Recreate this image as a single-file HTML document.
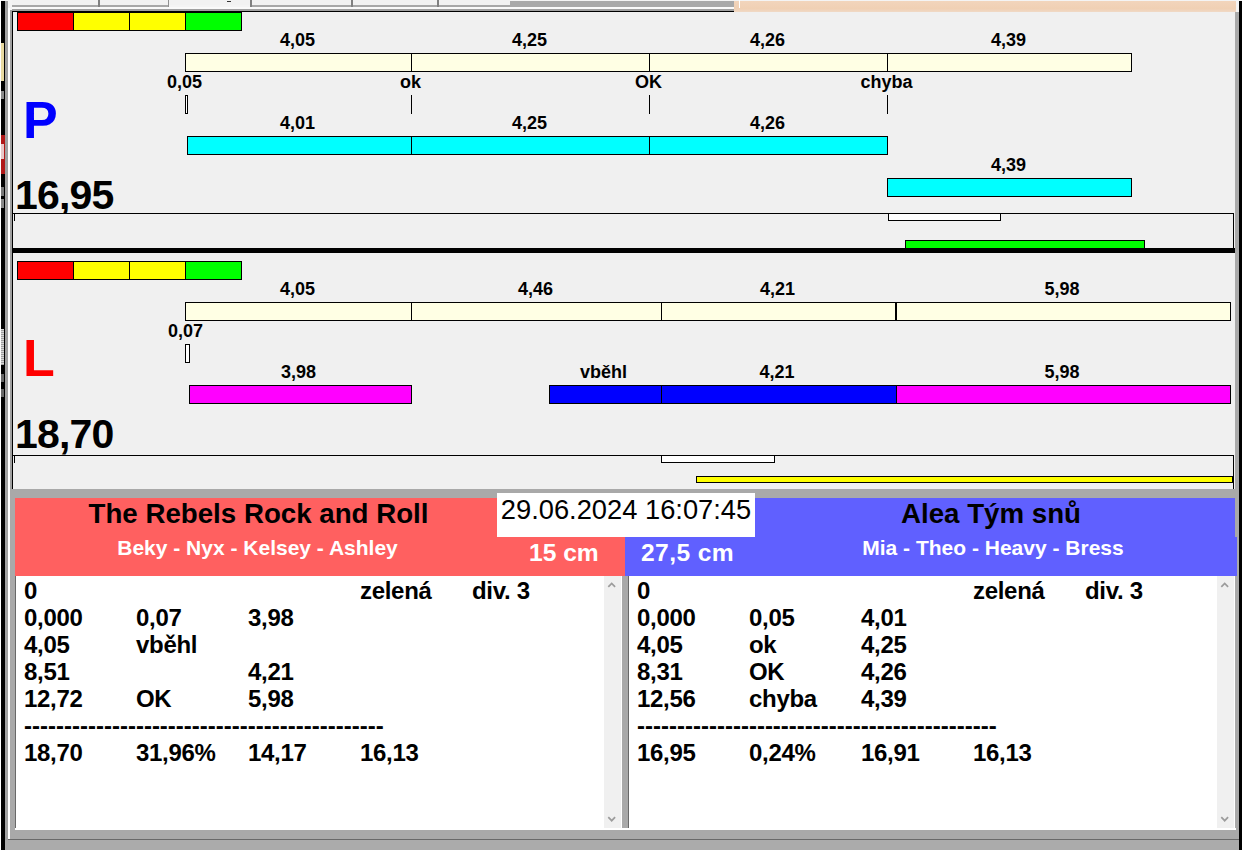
<!DOCTYPE html>
<html lang="cs">
<head>
<meta charset="utf-8">
<title>Flyball</title>
<style>
html,body{margin:0;padding:0;}
body{width:1242px;height:850px;overflow:hidden;background:#f0f0f0;position:relative;font-family:"Liberation Sans",Arial,sans-serif;font-weight:bold;color:#000;}
#root{position:absolute;left:0;top:0;width:1242px;height:850px;overflow:hidden;}
#root div{position:absolute;box-sizing:border-box;}
.bar{border:1px solid #000;}
.t{font-size:18px;line-height:20px;height:20px;text-align:center;white-space:nowrap;}
.big{font-size:52px;line-height:58px;white-space:nowrap;}
.num{font-size:41px;line-height:46px;white-space:nowrap;letter-spacing:-0.8px;}
.li{font-size:24px;line-height:27px;height:27px;white-space:nowrap;letter-spacing:-0.3px;}
.li.d{letter-spacing:0;}
.hd1{font-size:27.7px;line-height:30px;text-align:center;white-space:nowrap;}
.hd2{font-size:21px;line-height:24px;text-align:center;white-space:nowrap;color:#fff;}
.cm{font-size:24.6px;line-height:26px;white-space:nowrap;color:#fff;}
</style>
</head>
<body>
<div id="root">
<!-- top strip -->
<div style="left:0;top:0;width:1242px;height:12px;background:#f4f4f4;"></div>
<div style="left:12px;top:0;width:498px;height:5px;background:#f2f2f2;"></div>
<div style="left:12px;top:5px;width:157px;height:2px;background:#a8a8a8;"></div>
<div style="left:251px;top:5px;width:259px;height:2px;background:#a8a8a8;"></div>
<div style="left:98px;top:0;width:2px;height:7px;background:#808080;"></div>
<div style="left:168px;top:0;width:1px;height:7px;background:#909090;"></div>
<div style="left:250px;top:0;width:2px;height:7px;background:#808080;"></div>
<div style="left:351px;top:0;width:2px;height:7px;background:#808080;"></div>
<div style="left:437px;top:0;width:2px;height:7px;background:#808080;"></div>
<div style="left:510px;top:1px;width:224px;height:6px;background:#a9a9a9;"></div>
<div style="left:12px;top:7px;width:722px;height:2px;background:#fafafa;"></div>
<div style="left:12px;top:9px;width:722px;height:2px;background:#a0a0a0;"></div>
<div style="left:12px;top:11px;width:722px;height:1px;background:#000;"></div>
<div style="left:734px;top:1px;width:502px;height:11px;background:linear-gradient(#f2d5bc,#f0d0b4 70%,#f0d9c6);"></div>
<div style="left:739px;top:0;width:1px;height:8px;background:#fff;"></div>
<!-- left edge -->
<div style="left:0;top:0;width:1px;height:850px;background:#fff;"></div>
<div style="left:1px;top:1px;width:4px;height:849px;background:#000;"></div>
<div style="left:1px;top:43px;width:3px;height:38px;background:#e8d9a0;"></div>
<div style="left:1px;top:135px;width:4px;height:39px;background:#b01818;"></div>
<div style="left:1px;top:329px;width:3px;height:36px;background:repeating-linear-gradient(#d8d8d8 0 1px,#a0a0a0 1px 2px);"></div>
<div style="left:5px;top:1px;width:3px;height:849px;background:#a0a0a0;"></div>
<div style="left:8px;top:8px;width:2px;height:832px;background:#fff;"></div>
<div style="left:10px;top:10px;width:2px;height:830px;background:#a0a0a0;"></div>
<div style="left:12px;top:11px;width:1px;height:478px;background:#000;"></div>
<div style="left:1px;top:91px;width:3px;height:8px;background:#8a8a8a;"></div>
<div style="left:1px;top:144px;width:3px;height:15px;background:#e8c8c8;"></div>
<div style="left:1px;top:187px;width:3px;height:9px;background:#777;"></div>
<div style="left:1px;top:199px;width:3px;height:9px;background:#888;"></div>
<div style="left:1px;top:374px;width:3px;height:8px;background:#666;"></div>
<div style="left:1px;top:389px;width:3px;height:8px;background:#666;"></div>
<div style="left:227px;top:1px;width:4px;height:1px;background:#333;"></div>
<!-- right edge -->
<div style="left:1235px;top:12px;width:4px;height:838px;background:#a9a9a9;"></div>
<div style="left:1239px;top:1px;width:3px;height:849px;background:#000;"></div>
<!-- panels -->
<div class="bar" style="left:17px;top:12px;width:57px;height:19px;background:#ff0000;"></div>
<div class="bar" style="left:73px;top:12px;width:57px;height:19px;background:#ffff00;"></div>
<div class="bar" style="left:129px;top:12px;width:57px;height:19px;background:#ffff00;"></div>
<div class="bar" style="left:185px;top:12px;width:57px;height:19px;background:#00ff00;"></div>
<div class="bar" style="left:185px;top:53px;width:227px;height:19px;background:#ffffe4;"></div>
<div class="bar" style="left:411px;top:53px;width:239px;height:19px;background:#ffffe4;"></div>
<div class="bar" style="left:649px;top:53px;width:239px;height:19px;background:#ffffe4;"></div>
<div class="bar" style="left:887px;top:53px;width:245px;height:19px;background:#ffffe4;"></div>
<div class="t" style="left:237.5px;top:30px;width:120px;">4,05</div>
<div class="t" style="left:469.5px;top:30px;width:120px;">4,25</div>
<div class="t" style="left:707.5px;top:30px;width:120px;">4,26</div>
<div class="t" style="left:948.5px;top:30px;width:120px;">4,39</div>
<div class="t" style="left:124.5px;top:72px;width:120px;">0,05</div>
<div class="t" style="left:350.5px;top:72px;width:120px;">ok</div>
<div class="t" style="left:588.5px;top:72px;width:120px;">OK</div>
<div class="t" style="left:826.5px;top:72px;width:120px;">chyba</div>
<div class="bar" style="left:185px;top:95px;width:3px;height:19px;background:#fff;"></div>
<div style="left:411px;top:95px;width:1px;height:19px;background:#000;"></div>
<div style="left:649px;top:95px;width:1px;height:19px;background:#000;"></div>
<div style="left:887px;top:95px;width:1px;height:19px;background:#000;"></div>
<div class="bar" style="left:187px;top:136px;width:225px;height:19px;background:#00ffff;"></div>
<div class="bar" style="left:411px;top:136px;width:239px;height:19px;background:#00ffff;"></div>
<div class="bar" style="left:649px;top:136px;width:239px;height:19px;background:#00ffff;"></div>
<div class="t" style="left:237.5px;top:113px;width:120px;">4,01</div>
<div class="t" style="left:469.5px;top:113px;width:120px;">4,25</div>
<div class="t" style="left:707.5px;top:113px;width:120px;">4,26</div>
<div class="t" style="left:948.5px;top:155px;width:120px;">4,39</div>
<div class="bar" style="left:887px;top:178px;width:245px;height:19px;background:#00ffff;"></div>
<div class="big" style="left:23px;top:91px;color:#0000ff;">P</div>
<div class="num" style="left:15px;top:172px;">16,95</div>
<div style="left:13px;top:213px;width:1221px;height:35px;background:#f0f0f0;"></div>
<div style="left:13px;top:213px;width:1221px;height:1px;background:#000;"></div>
<div style="left:1233px;top:213px;width:1px;height:35px;background:#000;"></div>
<div style="left:14px;top:213px;width:1px;height:8px;background:#000;"></div>
<div class="bar" style="left:888px;top:213px;width:113px;height:8px;background:#fff;"></div>
<div class="bar" style="left:905px;top:240px;width:240px;height:9px;background:#00ff00;"></div>
<div style="left:13px;top:248px;width:1222px;height:5px;background:#000;"></div>
<div class="bar" style="left:17px;top:261px;width:57px;height:19px;background:#ff0000;"></div>
<div class="bar" style="left:73px;top:261px;width:57px;height:19px;background:#ffff00;"></div>
<div class="bar" style="left:129px;top:261px;width:57px;height:19px;background:#ffff00;"></div>
<div class="bar" style="left:185px;top:261px;width:57px;height:19px;background:#00ff00;"></div>
<div class="bar" style="left:185px;top:302px;width:227px;height:19px;background:#ffffe4;"></div>
<div class="bar" style="left:411px;top:302px;width:251px;height:19px;background:#ffffe4;"></div>
<div class="bar" style="left:661px;top:302px;width:235px;height:19px;background:#ffffe4;"></div>
<div class="bar" style="left:895px;top:302px;width:336px;height:19px;background:#ffffe4;"></div>
<div style="left:895px;top:302px;width:2px;height:19px;background:#000;"></div>
<div class="t" style="left:237.5px;top:279px;width:120px;">4,05</div>
<div class="t" style="left:475.5px;top:279px;width:120px;">4,46</div>
<div class="t" style="left:717.5px;top:279px;width:120px;">4,21</div>
<div class="t" style="left:1002.0px;top:279px;width:120px;">5,98</div>
<div class="t" style="left:125.5px;top:321px;width:120px;">0,07</div>
<div class="bar" style="left:185px;top:344px;width:5px;height:19px;background:#fff;"></div>
<div class="bar" style="left:189px;top:385px;width:223px;height:19px;background:#ff00ff;"></div>
<div class="bar" style="left:549px;top:385px;width:113px;height:19px;background:#0000ff;"></div>
<div class="bar" style="left:661px;top:385px;width:236px;height:19px;background:#0000ff;"></div>
<div class="bar" style="left:896px;top:385px;width:335px;height:19px;background:#ff00ff;"></div>
<div class="t" style="left:238.5px;top:362px;width:120px;">3,98</div>
<div class="t" style="left:543.5px;top:362px;width:120px;">vběhl</div>
<div class="t" style="left:717px;top:362px;width:120px;">4,21</div>
<div class="t" style="left:1002px;top:362px;width:120px;">5,98</div>
<div class="big" style="left:23px;top:329px;color:#ff0000;">L</div>
<div class="num" style="left:15px;top:411px;">18,70</div>
<div style="left:13px;top:455px;width:1221px;height:34px;background:#f0f0f0;"></div>
<div style="left:13px;top:455px;width:1221px;height:1px;background:#000;"></div>
<div style="left:1233px;top:455px;width:1px;height:34px;background:#000;"></div>
<div style="left:14px;top:455px;width:1px;height:8px;background:#000;"></div>
<div class="bar" style="left:661px;top:455px;width:114px;height:8px;background:#fff;"></div>
<div class="bar" style="left:696px;top:476px;width:537px;height:7px;background:#ffff00;"></div>
<!-- bottom -->
<div style="left:10px;top:489px;width:1229px;height:361px;background:#a9a9a9;"></div>
<div style="left:15px;top:498px;width:610px;height:78px;background:#ff6060;"></div>
<div style="left:625px;top:498px;width:610px;height:78px;background:#6060ff;"></div>
<div style="left:1235px;top:537px;width:2px;height:39px;background:#6060ff;"></div>
<div style="left:497px;top:493px;width:258px;height:44px;background:#fff;"></div>
<div style="left:497px;top:495px;width:258px;font-size:27.3px;line-height:30px;font-weight:normal;text-align:center;white-space:nowrap;">29.06.2024 16:07:45</div>
<div class="hd1" style="left:16px;top:499px;width:485px;">The Rebels Rock and Roll</div>
<div class="hd2" style="left:15px;top:536px;width:485px;">Beky - Nyx - Kelsey - Ashley</div>
<div class="cm" style="left:529px;top:540px;">15 cm</div>
<div class="cm" style="left:641px;top:540px;letter-spacing:0.4px;">27,5 cm</div>
<div class="hd1" style="left:755px;top:499px;width:472px;">Alea Tým snů</div>
<div class="hd2" style="left:755px;top:536px;width:476px;">Mia - Theo - Heavy - Bress</div>
<!-- lists -->
<div style="left:15px;top:576px;width:1px;height:253px;background:#696969;"></div>
<div style="left:16px;top:576px;width:588px;height:252px;background:#fff;"></div>
<div style="left:604px;top:576px;width:17px;height:252px;background:#f0f0f0;"></div>
<div style="left:621px;top:576px;width:1px;height:252px;background:#fff;"></div>
<div style="left:628px;top:576px;width:1px;height:253px;background:#696969;"></div>
<div style="left:629px;top:576px;width:588px;height:252px;background:#fff;"></div>
<div style="left:1217px;top:576px;width:17px;height:252px;background:#f0f0f0;"></div>
<div style="left:1234px;top:576px;width:1px;height:252px;background:#fff;"></div>
<svg style="position:absolute;left:604px;top:576px;" width="17" height="252" viewBox="0 0 17 252"><path d="M4.3 10.9 L7.7 7.4 L11.1 10.9 M4.3 241.2 L7.7 244.7 L11.1 241.2" fill="none" stroke="#9c9c9c" stroke-width="1.7"/></svg>
<svg style="position:absolute;left:1217px;top:576px;" width="17" height="252" viewBox="0 0 17 252"><path d="M4.3 10.9 L7.7 7.4 L11.1 10.9 M4.3 241.2 L7.7 244.7 L11.1 241.2" fill="none" stroke="#9c9c9c" stroke-width="1.7"/></svg>
<div class="li" style="left:24px;top:577px;">0</div>
<div class="li" style="left:360px;top:577px;">zelená</div>
<div class="li" style="left:472px;top:577px;">div. 3</div>
<div class="li" style="left:24px;top:604px;">0,000</div>
<div class="li" style="left:136px;top:604px;">0,07</div>
<div class="li" style="left:248px;top:604px;">3,98</div>
<div class="li" style="left:24px;top:631px;">4,05</div>
<div class="li" style="left:136px;top:631px;">vběhl</div>
<div class="li" style="left:24px;top:658px;">8,51</div>
<div class="li" style="left:248px;top:658px;">4,21</div>
<div class="li" style="left:24px;top:685px;">12,72</div>
<div class="li" style="left:136px;top:685px;">OK</div>
<div class="li" style="left:248px;top:685px;">5,98</div>
<div class="li d" style="left:24px;top:712px;">---------------------------------------------</div>
<div class="li" style="left:24px;top:739px;">18,70</div>
<div class="li" style="left:136px;top:739px;">31,96%</div>
<div class="li" style="left:248px;top:739px;">14,17</div>
<div class="li" style="left:360px;top:739px;">16,13</div>
<div class="li" style="left:637px;top:577px;">0</div>
<div class="li" style="left:973px;top:577px;">zelená</div>
<div class="li" style="left:1085px;top:577px;">div. 3</div>
<div class="li" style="left:637px;top:604px;">0,000</div>
<div class="li" style="left:749px;top:604px;">0,05</div>
<div class="li" style="left:861px;top:604px;">4,01</div>
<div class="li" style="left:637px;top:631px;">4,05</div>
<div class="li" style="left:749px;top:631px;">ok</div>
<div class="li" style="left:861px;top:631px;">4,25</div>
<div class="li" style="left:637px;top:658px;">8,31</div>
<div class="li" style="left:749px;top:658px;">OK</div>
<div class="li" style="left:861px;top:658px;">4,26</div>
<div class="li" style="left:637px;top:685px;">12,56</div>
<div class="li" style="left:749px;top:685px;">chyba</div>
<div class="li" style="left:861px;top:685px;">4,39</div>
<div class="li d" style="left:637px;top:712px;">---------------------------------------------</div>
<div class="li" style="left:637px;top:739px;">16,95</div>
<div class="li" style="left:749px;top:739px;">0,24%</div>
<div class="li" style="left:861px;top:739px;">16,91</div>
<div class="li" style="left:973px;top:739px;">16,13</div>
<!-- bottom edge -->
<div style="left:15px;top:828px;width:1221px;height:2px;background:#fff;"></div>
<div style="left:8px;top:839px;width:1231px;height:1px;background:#696969;"></div>
<div style="left:5px;top:840px;width:1234px;height:10px;background:#ababab;"></div>
</div>
</body>
</html>
